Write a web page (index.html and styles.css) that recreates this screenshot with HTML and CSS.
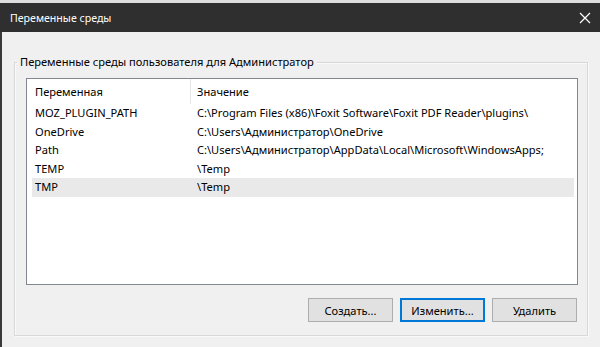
FILE: index.html
```
<!DOCTYPE html>
<html lang="ru">
<head>
<meta charset="utf-8">
<link rel="stylesheet" href="styles.css">
</head>
<body>
<div class="window">
  <div class="topstrip"></div>
  <div class="titlebar">
    <span class="title">Переменные среды</span>
    <svg class="close" width="12" height="12" viewBox="0 0 12 12"><path d="M1 1L11 11M11 1L1 11" stroke="#ffffff" stroke-width="1.2" fill="none"/></svg>
  </div>
  <div class="client">
    <div class="group">
      <div class="group-title">Переменные среды пользователя для Администратор</div>
      <div class="list">
        <div class="list-head">
          <div class="hcol1">Переменная</div>
          <div class="hcol2">Значение</div>
        </div>
        <div class="row"><div class="c1">MOZ_PLUGIN_PATH</div><div class="c2">C:\Program Files (x86)\Foxit Software\Foxit PDF Reader\plugins\</div></div>
        <div class="row"><div class="c1">OneDrive</div><div class="c2">C:\Users\Администратор\OneDrive</div></div>
        <div class="row"><div class="c1">Path</div><div class="c2">C:\Users\Администратор\AppData\Local\Microsoft\WindowsApps;</div></div>
        <div class="row"><div class="c1">TEMP</div><div class="c2">\Temp</div></div>
        <div class="row selected"><div class="c1">TMP</div><div class="c2">\Temp</div></div>
      </div>
      <div class="buttons">
        <button class="btn">Создать...</button>
        <button class="btn default">Изменить...</button>
        <button class="btn">Удалить</button>
      </div>
    </div>
  </div>
</div>
</body>
</html>
```
FILE: styles.css
```
html, body {
  margin: 0;
  padding: 0;
  background: #f0f0f0;
}
.window {
  width: 600px;
  height: 347px;
  display: flex;
  flex-direction: column;
  font-family: "Noto Sans", "Open Sans", sans-serif;
  font-size: 11.1px;
  color: #000;
  background: #f0f0f0;
  overflow: hidden;
}
.topstrip {
  height: 3px;
  background: #dedede;
}
.titlebar {
  height: 29px;
  background: #2f2f2f;
  display: flex;
  align-items: center;
  justify-content: space-between;
  padding: 0 10px 0 10px;
}
.title {
  color: #ffffff;
  font-size: 10.6px;
}
.close {
  display: block;
  margin-right: -1px;
}
.client {
  flex: 1;
  border-left: 2px solid #3a3a3a;
  padding-left: 12px;
}
.group {
  margin-top: 30px;
  width: 574px;
  box-sizing: border-box;
  border: 1px solid #d8d8d8;
  box-shadow: inset 1px 1px 0 #fafafa, 1px 1px 0 #fafafa;
  padding: 0 9px 13px 11px;
}
.group-title {
  width: fit-content;
  margin: -9px 0 0 -9px;
  padding: 0 3px;
  line-height: 16px;
  background: #f0f0f0;
}
.list {
  margin-top: 8px;
  height: 207px;
  box-sizing: border-box;
  border: 1px solid #828790;
  background: #ffffff;
}
.list-head {
  height: 25px;
  display: flex;
  align-items: center;
}
.hcol1 {
  width: 155px;
  padding-left: 8px;
  height: 25px;
  line-height: 25px;
  border-right: 1px solid #e5e5e5;
}
.hcol2 {
  padding-left: 6px;
}
.row {
  height: 18.5px;
  line-height: 18.5px;
  display: flex;
  margin: 0 3px 0 5px;
  white-space: nowrap;
}
.row.selected {
  background: #e9e9e9;
}
.c1 {
  width: 162px;
  padding-left: 3px;
}
.buttons {
  margin-top: 13px;
  margin-right: 1px;
  display: flex;
  justify-content: flex-end;
  gap: 7px;
}
.btn {
  width: 85px;
  height: 24px;
  box-sizing: border-box;
  border: 1px solid #adadad;
  background: #e1e1e1;
  font-family: "Noto Sans", "Open Sans", sans-serif;
  font-size: 11.1px;
  color: #000;
  padding: 0;
}
.btn.default {
  border: 2px solid #0078d7;
}
```
